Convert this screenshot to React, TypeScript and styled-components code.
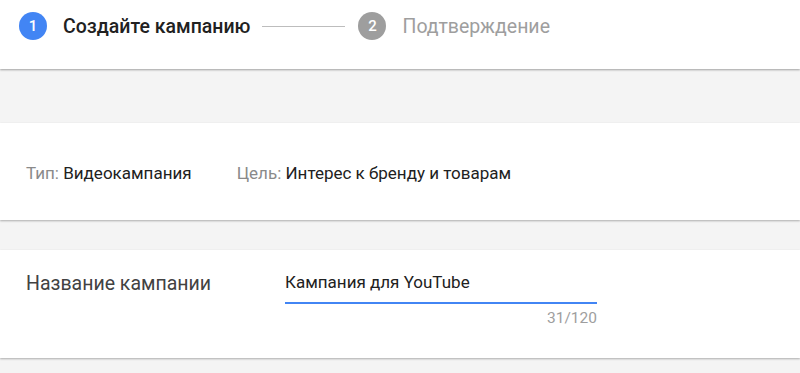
import styled, { createGlobalStyle } from "styled-components";

const GlobalStyle = createGlobalStyle`
  html, body {
    margin: 0;
    padding: 0;
    background: #f4f4f4;
    font-family: Roboto, "Noto Sans", Arial, sans-serif;
  }
  #root {
    height: 373px;
    overflow: hidden;
  }
`;

// ----------
// Stepper
// ----------
const StyledHeader = styled.header`
  position: relative;
  z-index: 2;
  height: 69px;
  background: #fff;
  box-shadow: 0 1px 2px rgba(0, 0, 0, 0.35);
  display: flex;
  align-items: flex-start;
  padding: 12px 0 0 19px;
  box-sizing: border-box;
`;

const StyledStep = styled.div`
  display: flex;
  align-items: center;
  height: 28px;
`;

const StyledStepNumber = styled.span<{ $active?: boolean }>`
  width: 28px;
  height: 28px;
  border-radius: 50%;
  background: ${(p) => (p.$active ? "#4285f4" : "#9e9e9e")};
  color: #fff;
  font-size: 15px;
  font-weight: 500;
  display: flex;
  align-items: center;
  justify-content: center;
`;

const StyledStepLabel = styled.span<{ $active?: boolean }>`
  margin-left: 16px;
  font-size: 19.5px;
  font-weight: ${(p) => (p.$active ? 500 : 400)};
  color: ${(p) => (p.$active ? "#212121" : "#9e9e9e")};
`;

const StyledConnector = styled.div`
  width: 83px;
  height: 1px;
  background: #bdbdbd;
  margin: 0 13px 0 12px;
`;

// ----------
// Content
// ----------
const StyledGap = styled.div<{ $h: number }>`
  height: ${(p) => p.$h}px;
`;

const StyledCard = styled.section<{ $h: number }>`
  height: ${(p) => p.$h}px;
  background: #fff;
  box-shadow: 0 1px 2px rgba(0, 0, 0, 0.3);
  box-sizing: border-box;
  padding-left: 26px;
`;

const StyledSummary = styled.div`
  display: flex;
  align-items: center;
  gap: 45px;
  height: 100%;
  padding-top: 3px;
  box-sizing: border-box;
  font-size: 17px;
`;

const StyledLabel = styled.span`
  color: #8a8a8a;
`;

const StyledValue = styled.span`
  color: #212121;
`;

const StyledFieldRow = styled.div`
  display: flex;
  align-items: flex-start;
  padding-top: 22px;
`;

const StyledFieldName = styled.div`
  width: 259px;
  font-size: 19.5px;
  line-height: 22px;
  color: #424242;
  padding-top: 1px;
`;

const StyledInputBox = styled.div`
  width: 312px;
  display: flex;
  flex-direction: column;
`;

const StyledInput = styled.div`
  font-size: 17px;
  line-height: 20px;
  color: #212121;
  padding-bottom: 10px;
  border-bottom: 2px solid #4285f4;
`;

const StyledCounter = styled.div`
  align-self: flex-end;
  font-size: 15.5px;
  line-height: 18px;
  color: #9e9e9e;
  margin-top: 5px;
`;

function App() {
  return (
    <>
      <GlobalStyle />
      <StyledHeader>
        <StyledStep>
          <StyledStepNumber $active>1</StyledStepNumber>
          <StyledStepLabel $active>Создайте кампанию</StyledStepLabel>
        </StyledStep>
        <StyledStep>
          <StyledConnector />
          <StyledStepNumber>2</StyledStepNumber>
          <StyledStepLabel>Подтверждение</StyledStepLabel>
        </StyledStep>
      </StyledHeader>

      <StyledGap $h={54} />

      <StyledCard $h={97}>
        <StyledSummary>
          <span>
            <StyledLabel>Тип: </StyledLabel>
            <StyledValue>Видеокампания</StyledValue>
          </span>
          <span>
            <StyledLabel>Цель: </StyledLabel>
            <StyledValue>Интерес к бренду и товарам</StyledValue>
          </span>
        </StyledSummary>
      </StyledCard>

      <StyledGap $h={30} />

      <StyledCard $h={108}>
        <StyledFieldRow>
          <StyledFieldName>Название кампании</StyledFieldName>
          <StyledInputBox>
            <StyledInput>Кампания для YouTube</StyledInput>
            <StyledCounter>31/120</StyledCounter>
          </StyledInputBox>
        </StyledFieldRow>
      </StyledCard>
    </>
  );
}

export default App;
